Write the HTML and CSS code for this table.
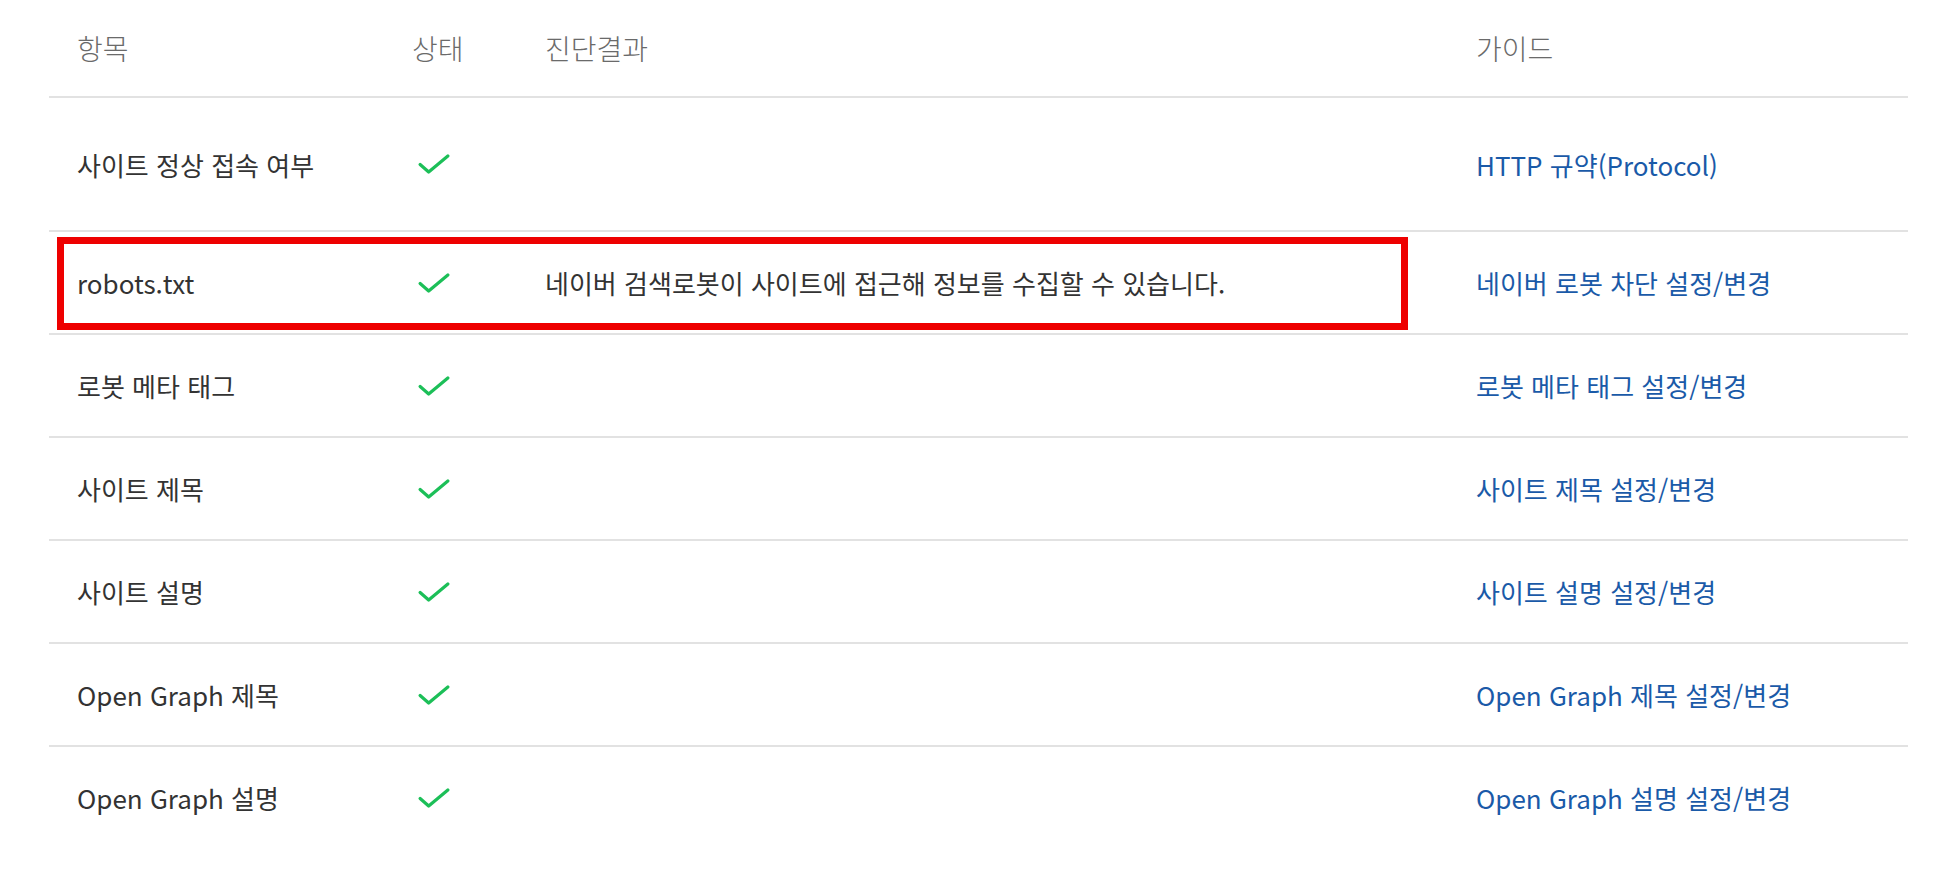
FILE: index.html
```html
<!DOCTYPE html>
<html lang="ko">
<head>
<meta charset="utf-8">
<title>사이트 진단</title>
<link rel="stylesheet" href="styles.css">
</head>
<body>
<div class="table">
  <div class="row head">
    <div class="c1">항목</div>
    <div class="c2">상태</div>
    <div class="c3">진단결과</div>
    <div class="c4">가이드</div>
  </div>
  <div class="row first">
    <div class="c1">사이트 정상 접속 여부</div>
    <div class="c2"><svg class="check" viewBox="0 0 30 20"><path d="M2 10.5 L10 17.5 L28 2.5"/></svg></div>
    <div class="c3"></div>
    <div class="c4"><a href="#">HTTP 규약(Protocol)</a></div>
  </div>
  <div class="row marked">
    <div class="c1">robots.txt</div>
    <div class="c2"><svg class="check" viewBox="0 0 30 20"><path d="M2 10.5 L10 17.5 L28 2.5"/></svg></div>
    <div class="c3">네이버 검색로봇이 사이트에 접근해 정보를 수집할 수 있습니다.</div>
    <div class="c4"><a href="#">네이버 로봇 차단 설정/변경</a></div>
    <div class="highlight"></div>
  </div>
  <div class="row">
    <div class="c1">로봇 메타 태그</div>
    <div class="c2"><svg class="check" viewBox="0 0 30 20"><path d="M2 10.5 L10 17.5 L28 2.5"/></svg></div>
    <div class="c3"></div>
    <div class="c4"><a href="#">로봇 메타 태그 설정/변경</a></div>
  </div>
  <div class="row">
    <div class="c1">사이트 제목</div>
    <div class="c2"><svg class="check" viewBox="0 0 30 20"><path d="M2 10.5 L10 17.5 L28 2.5"/></svg></div>
    <div class="c3"></div>
    <div class="c4"><a href="#">사이트 제목 설정/변경</a></div>
  </div>
  <div class="row">
    <div class="c1">사이트 설명</div>
    <div class="c2"><svg class="check" viewBox="0 0 30 20"><path d="M2 10.5 L10 17.5 L28 2.5"/></svg></div>
    <div class="c3"></div>
    <div class="c4"><a href="#">사이트 설명 설정/변경</a></div>
  </div>
  <div class="row">
    <div class="c1">Open Graph 제목</div>
    <div class="c2"><svg class="check" viewBox="0 0 30 20"><path d="M2 10.5 L10 17.5 L28 2.5"/></svg></div>
    <div class="c3"></div>
    <div class="c4"><a href="#">Open Graph 제목 설정/변경</a></div>
  </div>
  <div class="row last">
    <div class="c1">Open Graph 설명</div>
    <div class="c2"><svg class="check" viewBox="0 0 30 20"><path d="M2 10.5 L10 17.5 L28 2.5"/></svg></div>
    <div class="c3"></div>
    <div class="c4"><a href="#">Open Graph 설명 설정/변경</a></div>
  </div>
</div>
</body>
</html>
```

FILE: styles.css
```css
html, body {
  margin: 0;
  padding: 0;
  background: #fff;
}
body {
  font-family: "Noto Sans CJK KR", "Noto Sans", sans-serif;
  font-size: 26px;
  color: #333;
}
.table {
  margin-left: 49px;
  width: 1859px;
}
.row {
  position: relative;
  display: grid;
  grid-template-columns: 363px 133px 931px 1fr;
  align-items: center;
  height: 101px;
  border-bottom: 2px solid #e2e2e2;
}
.row.head {
  height: 96px;
  color: #6a6a6a;
  font-size: 28px;
  font-weight: 300;
}
.row.first {
  height: 132px;
}
.row.last {
  border-bottom: none;
}
.c1 {
  padding-left: 28px;
}
.c2 {
  display: flex;
  align-items: center;
}
.check {
  width: 32px;
  height: 22px;
  margin-left: 6px;
  fill: none;
  stroke: #1cbf58;
  stroke-width: 3;
  stroke-linecap: round;
  stroke-linejoin: round;
}
.c4 a {
  color: #1a5aa8;
  text-decoration: none;
}
.highlight {
  position: absolute;
  left: 8px;
  top: 5px;
  width: 1351px;
  height: 93px;
  box-sizing: border-box;
  border: 7px solid #ee0000;
  pointer-events: none;
}
```
